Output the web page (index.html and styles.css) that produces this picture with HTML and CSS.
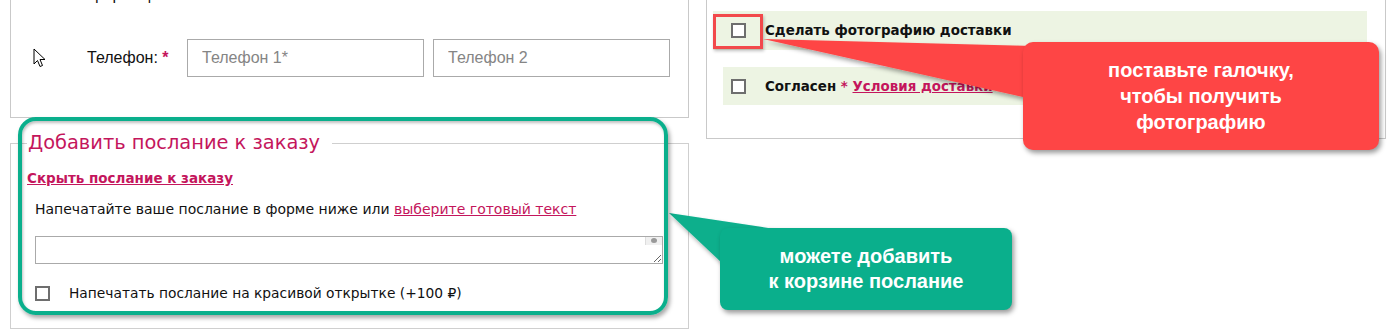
FILE: index.html
```html
<!DOCTYPE html>
<html lang="ru">
<head>
<meta charset="utf-8">
<link rel="stylesheet" href="styles.css">
</head>
<body>
<div class="page">
  <div class="col-left">
    <div class="panel panel-contacts">
      <div class="info-line">Информации</div>
      <div class="phone-row">
        <span class="cursor-slot">
          <svg width="14" height="20" viewBox="0 0 14 20"><path d="M1 1 L1 16 L4.5 12.5 L7 18.5 L9.5 17.5 L7 11.5 L12 11.5 Z" fill="#fff" stroke="#000" stroke-width="1" stroke-linejoin="miter"/></svg>
        </span>
        <label class="phone-label">Телефон: <span class="req">*</span></label>
        <input class="phone-input" type="text" placeholder="Телефон 1*">
        <input class="phone-input" type="text" placeholder="Телефон 2">
      </div>
    </div>
    <fieldset class="message-box">
      <legend class="message-legend">Добавить послание к заказу</legend>
      <a class="hide-link" href="#">Скрыть послание к заказу</a>
      <p class="message-hint">Напечатайте ваше послание в форме ниже или <a class="plain-link" href="#">выберите готовый текст</a></p>
      <div class="textarea-wrap">
        <textarea class="message-text"></textarea>
        <span class="ta-scroll"></span>
      </div>
      <div class="card-row">
        <span class="fake-check"></span>
        <span class="card-text">Напечатать послание на красивой открытке (+100 ₽)</span>
      </div>
    </fieldset>
  </div>
  <div class="col-right">
    <div class="panel panel-options">
      <div class="opt-row opt-photo">
        <span class="fake-check"></span>
        <span class="opt-text">Сделать фотографию доставки</span>
      </div>
      <div class="opt-row opt-agree">
        <span class="fake-check"></span>
        <span class="opt-text">Согласен <span class="req">*</span> <a class="terms-link" href="#">Условия доставки</a></span>
      </div>
    </div>
  </div>

  <svg class="pointers" width="1393" height="333" viewBox="0 0 1393 333">
    <defs>
      <filter id="sh" x="-10%" y="-10%" width="130%" height="150%">
        <feDropShadow dx="2" dy="3" stdDeviation="2" flood-color="#000" flood-opacity="0.35"/>
      </filter>
    </defs>
    <polygon points="669,213 775,229 722,263" fill="#0aaf8c" filter="url(#sh)"/>
    <polygon points="763,39 1032,46 1032,99" fill="#fe4545" filter="url(#sh)"/>
  </svg>
  <div class="hl-frame"></div>
  <div class="hl-check"></div>
  <div class="callout callout-green">можете добавить<br>к корзине послание</div>
  <div class="callout callout-red">поставьте галочку,<br>чтобы получить<br>фотографию</div>
</div>
</body>
</html>
```

FILE: styles.css
```css
html, body {
  margin: 0;
  padding: 0;
  background: #fff;
}
body {
  font-family: "DejaVu Sans", Verdana, sans-serif;
  color: #111;
}
.page {
  position: relative;
  width: 1393px;
  height: 333px;
  overflow: hidden;
  display: flex;
  gap: 17px;
  padding-left: 10px;
  box-sizing: border-box;
}
.col-left {
  width: 679px;
  display: flex;
  flex-direction: column;
}
.col-right {
  width: 680px;
}
.panel {
  border: 1px solid #c9c9c9;
  box-sizing: border-box;
  margin-top: -40px;
}
.panel-contacts {
  height: 158px;
  padding-top: 25px;
}
.info-line {
  font-family: "Liberation Sans", Arial, sans-serif;
  font-size: 16px;
  line-height: 18px;
  padding-left: 59px;
  color: #111;
}
.phone-row {
  display: flex;
  align-items: center;
  margin-top: 35px;
  height: 38px;
}
.cursor-slot {
  width: 14px;
  height: 20px;
  margin-left: 22px;
  margin-top: 0;
  display: block;
  flex: none;
}
.cursor-slot svg { display: block; }
.phone-label {
  font-family: "Liberation Sans", Arial, sans-serif;
  font-size: 16px;
  color: #111;
  margin-left: 40px;
  width: 100px;
  flex: none;
}
.req {
  color: #c4165c;
  font-weight: bold;
}
.phone-input {
  width: 237px;
  height: 38px;
  flex: none;
  box-sizing: border-box;
  border: 1px solid #aaa;
  padding: 0 14px;
  font-family: "Liberation Sans", Arial, sans-serif;
  font-size: 16px;
  margin: 0 9px 0 0;
  outline: none;
}
.phone-input::placeholder {
  color: #858585;
}
.message-box {
  margin: 13px 0 0;
  border: 1px solid #cfcfcf;
  padding: 0 0 26px 16px;
  min-width: 0;
  box-sizing: border-box;
  height: 198px;
}
.message-legend {
  font-size: 19.4px;
  line-height: 24px;
  color: #c4165c;
  padding: 0 12px 0 1px;
}
.hide-link {
  display: block;
  margin-top: 14px;
  font-size: 13.5px;
  line-height: 18px;
  font-weight: bold;
  color: #c4165c;
  text-decoration: underline;
  width: max-content;
}
.message-hint {
  margin: 13px 0 0 8px;
  font-size: 14px;
  line-height: 18px;
  color: #111;
}
.plain-link {
  color: #c4165c;
  text-decoration: underline;
}
.textarea-wrap {
  position: relative;
  margin: 18px 0 0 8px;
  width: 628px;
  height: 28px;
}
.message-text {
  display: block;
  width: 628px;
  height: 28px;
  box-sizing: border-box;
  border: 1px solid #aaa;
  margin: 0;
  padding: 2px;
  resize: both;
  overflow: hidden;
}
.ta-scroll {
  position: absolute;
  right: 1px;
  top: 1px;
  width: 16px;
  height: 8px;
  background: #f0f0f0;
  border-left: 1px solid #ddd;
}
.ta-scroll::after {
  content: "";
  position: absolute;
  left: 5px;
  top: 1px;
  width: 6px;
  height: 5px;
  border-radius: 50%;
  background: #999;
}
.card-row {
  display: flex;
  align-items: center;
  margin: 20px 0 0 8px;
  height: 18px;
}
.fake-check {
  display: block;
  width: 15px;
  height: 15px;
  box-sizing: border-box;
  border: 2px solid #6e6e6e;
  background: #fff;
  flex: none;
}
.card-text {
  margin-left: 19px;
  font-size: 13.8px;
  line-height: 18px;
  color: #111;
}
.panel-options {
  height: 179px;
  padding-top: 50px;
}
.opt-row {
  display: flex;
  align-items: center;
  background: #edf4e3;
}
.opt-photo {
  margin-left: 6px;
  width: 654px;
  height: 39px;
  padding-left: 18px;
  box-sizing: border-box;
}
.opt-agree {
  margin-left: 16px;
  width: 644px;
  height: 38px;
  margin-top: 17px;
  padding-left: 8px;
  box-sizing: border-box;
}
.opt-text {
  margin-left: 19px;
  font-size: 13.4px;
  font-weight: bold;
  color: #111;
}
.terms-link {
  color: #c4165c;
  text-decoration: underline;
}
.pointers {
  position: absolute;
  left: 0;
  top: 0;
  pointer-events: none;
}
.hl-frame {
  position: absolute;
  left: 18px;
  top: 117px;
  width: 650px;
  height: 198px;
  box-sizing: border-box;
  border: 4px solid #0aaf8c;
  border-radius: 18px;
  box-shadow: 2px 3px 4px rgba(0,0,0,0.35), inset 1px 2px 3px rgba(0,0,0,0.25);
}
.hl-check {
  position: absolute;
  left: 713px;
  top: 14px;
  width: 50px;
  height: 35px;
  box-sizing: border-box;
  border: 3px solid #f2494b;
  box-shadow: 1px 2px 3px rgba(0,0,0,0.25);
}
.callout {
  position: absolute;
  display: flex;
  align-items: center;
  justify-content: center;
  text-align: center;
  color: #fff;
  font-family: "Liberation Sans", Arial, sans-serif;
  font-weight: bold;
  font-size: 20px;
  box-shadow: 2px 3px 5px rgba(0,0,0,0.4);
}
.callout-green {
  left: 720px;
  top: 228px;
  width: 292px;
  height: 82px;
  border-radius: 8px;
  background: #0aaf8c;
  line-height: 25px;
}
.callout-red {
  left: 1023px;
  top: 42px;
  width: 356px;
  height: 108px;
  border-radius: 10px;
  background: #fe4545;
  line-height: 26px;
}
```
